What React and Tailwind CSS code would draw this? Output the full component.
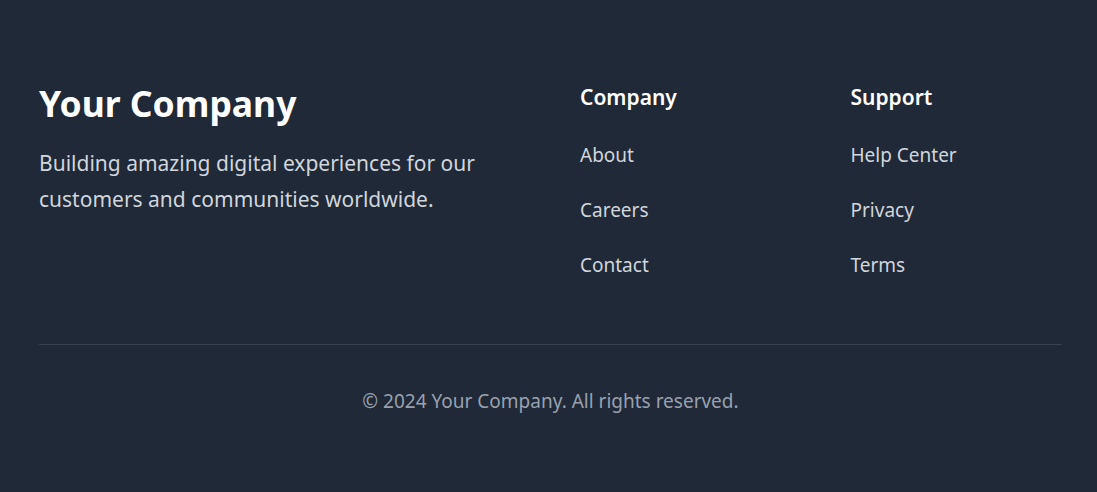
import React from "react";

const columns = [
  { title: "Company", links: ["About", "Careers", "Contact"] },
  { title: "Support", links: ["Help Center", "Privacy", "Terms"] },
];

export default function App() {
  return (
    <footer className="min-h-screen bg-[#1f2937] font-['Noto_Sans',sans-serif] text-white">
      <div className="ml-[39px] w-[1023px] pt-[83px]">
        <div className="grid grid-cols-4 gap-x-[59px]">
          <div className="col-span-2">
            <h2 className="text-[35.5px] leading-10 font-bold">Your Company</h2>
            <p className="mt-[22px] text-[21px] leading-[36px] text-gray-300">
              Building amazing digital experiences for our customers and
              communities worldwide.
            </p>
          </div>

          {columns.map((col) => (
            <div key={col.title}>
              <h3 className="text-[21px] leading-7 font-semibold">{col.title}</h3>
              <ul className="mt-[30px] flex flex-col gap-[27px]">
                {col.links.map((l) => (
                  <li key={l}>
                    <a href="#" className="block text-[19px] leading-7 text-gray-300 hover:text-white">
                      {l}
                    </a>
                  </li>
                ))}
              </ul>
            </div>
          ))}
        </div>

        <div className="mt-[65px] border-t border-gray-700 pt-[42px] text-center">
          <p className="text-[19px] leading-7 text-gray-400">
            © 2024 Your Company. All rights reserved.
          </p>
        </div>
      </div>
    </footer>
  );
}
